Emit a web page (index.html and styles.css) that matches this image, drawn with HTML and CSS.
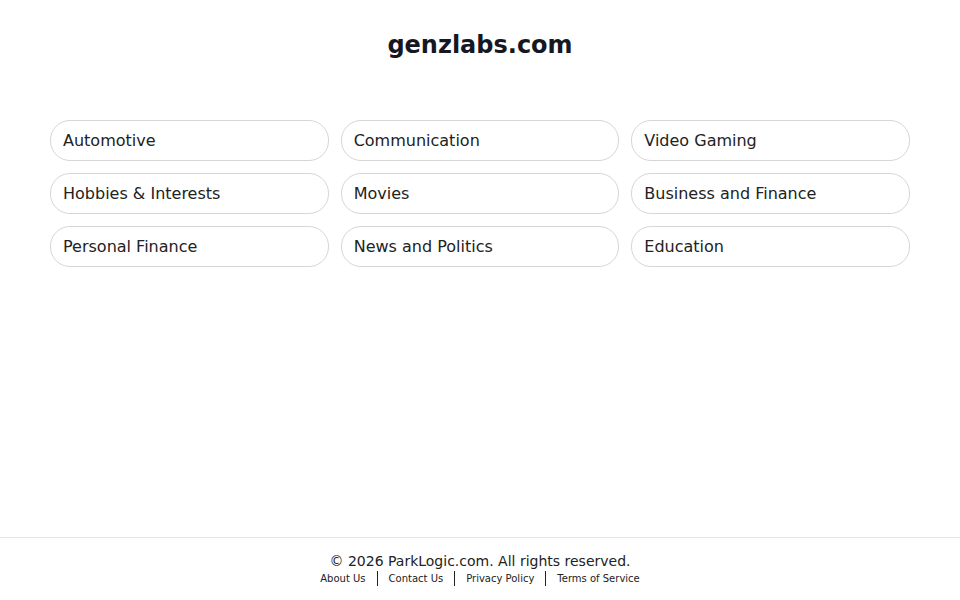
FILE: index.html
```html
<!DOCTYPE html>
<html lang="en">
<head>
    <meta charset="UTF-8">
    <meta name="viewport" content="width=device-width, initial-scale=1.0">
    <title>genzlabs.com</title>
    <link rel="stylesheet" href="styles.css">
</head>
<body>
    <main class="content">
        <h1 class="site-title">genzlabs.com</h1>
        <div class="topics">
            <a class="topic" href="#">Automotive</a>
            <a class="topic" href="#">Communication</a>
            <a class="topic" href="#">Video Gaming</a>
            <a class="topic" href="#">Hobbies &amp; Interests</a>
            <a class="topic" href="#">Movies</a>
            <a class="topic" href="#">Business and Finance</a>
            <a class="topic" href="#">Personal Finance</a>
            <a class="topic" href="#">News and Politics</a>
            <a class="topic" href="#">Education</a>
        </div>
    </main>

    <footer class="footer">
        <div class="copyright">&copy; 2026 ParkLogic.com. All rights reserved.</div>
        <div class="footer-links">
            <a href="#">About Us</a>
            <span class="sep"></span>
            <a href="#">Contact Us</a>
            <span class="sep"></span>
            <a href="#">Privacy Policy</a>
            <span class="sep"></span>
            <a href="#">Terms of Service</a>
        </div>
    </footer>
</body>
</html>
```

FILE: styles.css
```css
body {
    margin: 0;
    min-height: 100vh;
    display: flex;
    flex-direction: column;
    font-family: "DejaVu Sans", sans-serif;
    color: #222;
    background: #fff;
}
.content {
    flex: 1;
    padding: 31px 50px 30px;
}
.site-title {
    margin: 0 0 61px;
    font-size: 24px;
    line-height: 28px;
    text-align: center;
    color: #151823;
}
.topics {
    display: grid;
    grid-template-columns: repeat(3, 1fr);
    gap: 12px;
}
.topic {
    display: block;
    height: 39px;
    line-height: 39px;
    padding: 0 12px;
    border: 1px solid #d6d6d6;
    border-radius: 20px;
    font-size: 16px;
    color: #222;
    text-decoration: none;
}
.topic:hover {
    background-color: #f5f5f5;
}
.footer {
    border-top: 1px solid #e6e6e6;
    padding: 15px 0 14px;
    text-align: center;
}
.copyright {
    font-size: 14px;
    line-height: 17px;
    color: #222;
}
.footer-links {
    margin-top: 1px;
    display: flex;
    justify-content: center;
    align-items: center;
    font-size: 10px;
    line-height: 14px;
}
.footer-links a {
    color: #222;
    text-decoration: none;
}
.sep {
    width: 1px;
    height: 15px;
    margin: 0 11px;
    background: #222;
}
```
